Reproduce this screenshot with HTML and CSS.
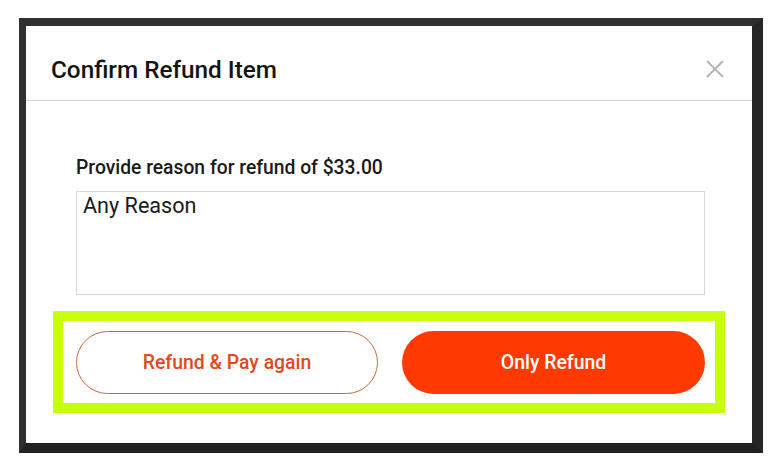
FILE: index.html
```html
<!DOCTYPE html>
<html lang="en">
<head>
<meta charset="utf-8">
<title>Confirm Refund Item</title>
<link rel="stylesheet" href="styles.css">
</head>
<body>
<div class="modal">
  <div class="modal-header">
    <h1 class="modal-title">Confirm Refund Item</h1>
    <button class="close" aria-label="Close">
      <svg width="18" height="18" viewBox="0 0 18 18"><path d="M1 1 L17 17 M17 1 L1 17" stroke="#b3b3b3" stroke-width="1.8" fill="none"/></svg>
    </button>
  </div>
  <div class="modal-body">
    <label class="reason-label" for="reason">Provide reason for refund of $33.00</label>
    <textarea id="reason" class="reason">Any Reason</textarea>
  </div>
  <div class="highlight">
    <button class="btn btn-outline">Refund &amp; Pay again</button>
    <button class="btn btn-solid">Only Refund</button>
  </div>
</div>
</body>
</html>
```
FILE: styles.css
```css
html, body {
  margin: 0;
  padding: 0;
  background: #ffffff;
  font-family: Roboto, "Noto Sans", Arial, sans-serif;
}
body {
  padding: 18px 0 0 19px;
}
.modal {
  width: 726px;
  height: 417px;
  background: #ffffff;
  border-style: solid;
  border-width: 8px 11px 10px 7px;
  border-color: #303030 #262626 #222222 #303030;
  display: flex;
  flex-direction: column;
}
.modal-header {
  height: 74px;
  border-bottom: 1px solid #d2d2d2;
  display: flex;
  align-items: center;
  justify-content: space-between;
  padding: 0 28px 0 25px;
}
.modal-title {
  margin: 0;
  font-size: 24.3px;
  font-weight: 500;
  color: #141414;
  line-height: 28px;
  padding-top: 14px;
}
.close {
  border: 0;
  background: none;
  padding: 0;
  width: 18px;
  height: 18px;
  display: flex;
  margin-top: 12px;
}
.modal-body {
  padding: 55px 47px 0 50px;
  display: flex;
  flex-direction: column;
}
.reason-label {
  font-size: 19.3px;
  font-weight: 500;
  color: #1a1a1a;
  line-height: 24px;
  margin-bottom: 11px;
}
.reason {
  box-sizing: border-box;
  height: 104px;
  border: 1px solid #d4d7db;
  font-family: Roboto, "Noto Sans", Arial, sans-serif;
  font-size: 21.6px;
  line-height: 26px;
  color: #1a1a1a;
  padding: 1px 6px;
  resize: none;
  margin: 0;
  border-radius: 0;
}
.highlight {
  margin: 16px 27px 0 27px;
  border: 10px solid #c8ff0c;
  padding: 10px 10px 9px 13px;
  display: flex;
  gap: 24px;
}
.btn {
  height: 63px;
  border-radius: 32px;
  font-family: Roboto, "Noto Sans", Arial, sans-serif;
  font-size: 19.4px;
  font-weight: 500;
  cursor: pointer;
  padding: 0;
}
.btn-outline {
  width: 302px;
  background: #ffffff;
  border: 1px solid #c9673f;
  color: #e2491c;
}
.btn-solid {
  width: 303px;
  background: #ff3a00;
  border: 0;
  color: #ffffff;
}
```
